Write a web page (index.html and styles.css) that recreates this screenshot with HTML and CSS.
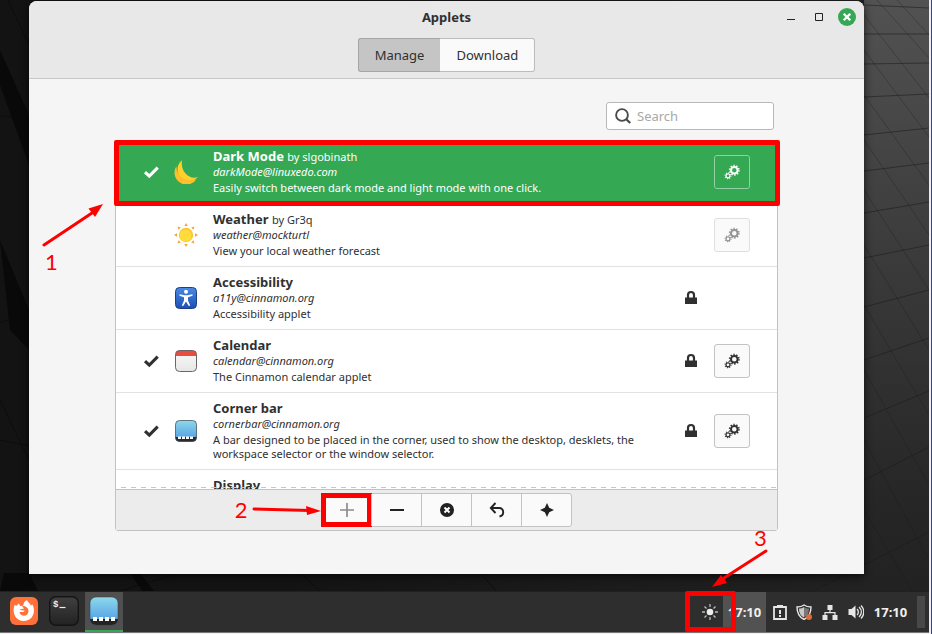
FILE: index.html
```html
<!DOCTYPE html>
<html lang="en">
<head>
<meta charset="utf-8">
<title>Applets</title>
<link rel="stylesheet" href="styles.css">
</head>
<body>
<svg class="defs" aria-hidden="true">
  <defs>
    <linearGradient id="blue" x1="0" y1="0" x2="0" y2="1"><stop offset="0" stop-color="#4a8ae4"/><stop offset="1" stop-color="#1b4fb4"/></linearGradient>
    <linearGradient id="sky" x1="0" y1="0" x2="0" y2="1"><stop offset="0" stop-color="#8ed8ea"/><stop offset="1" stop-color="#4a97e6"/></linearGradient>
    <linearGradient id="paper" x1="0" y1="0" x2="0" y2="1"><stop offset="0" stop-color="#fafafa"/><stop offset="1" stop-color="#e6e6e6"/></linearGradient>
    <linearGradient id="coal" x1="0" y1="0" x2="0" y2="1"><stop offset="0" stop-color="#404040"/><stop offset="1" stop-color="#222"/></linearGradient>
    <symbol id="check" viewBox="0 0 16 16"><path d="M2 8.1l4.300 4L14.700 3.700" fill="none" stroke="currentColor" stroke-width="3.100"/></symbol>
    <symbol id="lock" viewBox="0 0 16 16"><path d="M2 7.500h12V14H2z" fill="currentColor"/><path d="M5 8V5a3 3 0 0 1 6 0v3" fill="none" stroke="currentColor" stroke-width="2.200"/></symbol>
    <symbol id="gears" viewBox="0 0 16 16">
      <g fill="none" stroke="currentColor">
        <circle cx="10.300" cy="6.200" r="3.300" stroke-width="2"/>
        <circle cx="10.300" cy="6.200" r="4.700" stroke-width="1.600" stroke-dasharray="1.400 1.550"/>
        <circle cx="4" cy="11.800" r="2" stroke-width="1.200"/>
        <circle cx="4" cy="11.800" r="3" stroke-width="1.100" stroke-dasharray="1 1.350"/>
      </g>
    </symbol>
  </defs>
</svg>

<main class="desktop">
  <svg class="wallpaper" viewBox="0 0 929 591" preserveAspectRatio="none" aria-hidden="true">
    <g fill="#090909">
      <path d="M0 50L29 115V165L0 85zM0 240L29 310V350L10 330zM29 573L38 591H0L4 573zM130 573l12 18h12l-14-18z"/>
    </g>
    <g stroke="#0b0b0b" stroke-opacity=".7" stroke-width="1" fill="none">
      <path d="M0 322l29-6M0 116l29 2M0 440l29 6M8 0l21 45M0 400l29 60M120 591l60-18M300 573l20 18M480 573l16 18"/>
    </g>
    <g stroke="#1c1c1c" stroke-opacity=".3" stroke-width="1" fill="none">
      <path stroke-opacity=".55" d="M864 5l65 3M864 34l65 0M864 64l65-1M864 97l65-3M864 135l65-7M864 171l65-8M864 213l65-11M864 258l65-13M864 307l65-17M864 360l65-22M864 418l65-27M864 480l65-33M813 591l116-59"/>
      <path d="M877 0l52 58M897 0l32 35M864 15l65 83M864 50l65 87M864 95l65 90M864 140l65 95M864 190l65 100M864 245l65 105M864 305l65 110M864 370l65 115M864 440l65 120M864 510l48 81"/>
    </g>
  </svg>

  <section class="window" aria-label="Applets">
    <header class="titlebar">
      <div class="title-row">
        <h1>Applets</h1>
        <div class="controls">
          <button aria-label="Minimize"><svg viewBox="0 0 18 18"><path d="M5 11.500h8" stroke="#222"/></svg></button>
          <button aria-label="Maximize"><svg viewBox="0 0 18 18"><path d="M5.500 5.500h7v7h-7z" fill="none" stroke="#222"/></svg></button>
          <button aria-label="Close"><svg viewBox="0 0 18 18"><circle cx="9" cy="9" r="9" fill="#35a854"/><path d="M5.700 5.700l6.600 6.600M12.300 5.700l-6.600 6.600" stroke="#fff" stroke-width="2.300"/></svg></button>
        </div>
      </div>
      <nav class="tabs">
        <button class="tab active">Manage</button>
        <button class="tab">Download</button>
      </nav>
    </header>

    <div class="content">
      <label class="search">
        <svg viewBox="0 0 16 16" aria-hidden="true"><circle cx="7" cy="7" r="5.900" fill="none" stroke="#4a4a4a" stroke-width="1.900"/><path d="M11 11l4.200 4" stroke="#4a4a4a" stroke-width="2.300"/></svg>
        <input type="search" placeholder="Search" aria-label="Search">
      </label>

      <div class="panel">
        <ul class="applets">
          <li class="applet selected">
            <svg class="mark"><use href="#check"/></svg>
            <svg class="icon" viewBox="0 0 24 24"><path d="M8 .2A11.600 11.600 0 1 0 24 16.800C16 20.500 6 12 8 .2z" fill="#ffd02c"/><path d="M2.500 6A11.600 11.600 0 0 0 22.500 19.200C13 23 1.500 16 2.500 6z" fill="#fdbf2d"/><path d="M13 3.500l1 1.500-1 1.500-1-1.500zM12.500 10l1.200 1.300-1.200 1.300-1.200-1.300zM19.500 9l1 1.200-1 1.200-1-1.200z" fill="#2b9c85"/></svg>
            <div class="info"><h2>Dark Mode <span>by slgobinath</span></h2><em>darkMode@linuxedo.com</em><p>Easily switch between dark mode and light mode with one click.</p></div>
            <span class="locked"></span>
            <button class="gear" aria-label="Configure Dark Mode"><svg><use href="#gears"/></svg></button>
          </li>
          <li class="applet">
            <span class="mark"></span>
            <svg class="icon" viewBox="0 0 24 24"><g fill="#f8a23b"><path id="ray" d="M12 0l1.700 3h-3.400z"/><use href="#ray" transform="rotate(45 12 12)"/><use href="#ray" transform="rotate(90 12 12)"/><use href="#ray" transform="rotate(135 12 12)"/><use href="#ray" transform="rotate(180 12 12)"/><use href="#ray" transform="rotate(225 12 12)"/><use href="#ray" transform="rotate(270 12 12)"/><use href="#ray" transform="rotate(315 12 12)"/></g><circle cx="12" cy="12" r="7.200" fill="#fdc62c"/><circle cx="11.500" cy="12.500" r="6" fill="#ffdc3c"/></svg>
            <div class="info"><h2>Weather <span>by Gr3q</span></h2><em>weather@mockturtl</em><p>View your local weather forecast</p></div>
            <span class="locked"></span>
            <button class="gear" disabled aria-label="Configure Weather"><svg><use href="#gears"/></svg></button>
          </li>
          <li class="applet">
            <span class="mark"></span>
            <svg class="icon" viewBox="0 0 24 24"><rect x="1.500" y="1.500" width="21" height="21" rx="4" fill="url(#blue)" stroke="#1c3f86"/><circle cx="12" cy="5.800" r="2" fill="#fff"/><path d="M5.500 8.200l5 1h3l5-1v1.500l-4.500 1.500v3.300l2.200 5-1.400.5L12 15.500 9.200 20l-1.400-.5 2.200-5v-3.300L5.500 9.700z" fill="#fff"/></svg>
            <div class="info"><h2>Accessibility</h2><em>a11y@cinnamon.org</em><p>Accessibility applet</p></div>
            <svg class="locked"><use href="#lock"/></svg>
            <span class="gear-space"></span>
          </li>
          <li class="applet">
            <svg class="mark"><use href="#check"/></svg>
            <svg class="icon" viewBox="0 0 24 24"><rect x="1.500" y="1.500" width="21" height="21" rx="4" fill="url(#paper)"/><path d="M1.500 7V5.500a4 4 0 0 1 4-4h13a4 4 0 0 1 4 4V7z" fill="#e84e40"/><rect x="1.500" y="1.500" width="21" height="21" rx="4" fill="none" stroke="#6b6565"/></svg>
            <div class="info"><h2>Calendar</h2><em>calendar@cinnamon.org</em><p>The Cinnamon calendar applet</p></div>
            <svg class="locked"><use href="#lock"/></svg>
            <button class="gear" aria-label="Configure Calendar"><svg><use href="#gears"/></svg></button>
          </li>
          <li class="applet">
            <svg class="mark"><use href="#check"/></svg>
            <svg class="icon" viewBox="0 0 24 24"><rect x="1.500" y="1.500" width="21" height="21" rx="4" fill="url(#sky)"/><path d="M1.500 18h21v.5a4 4 0 0 1-4 4h-13a4 4 0 0 1-4-4z" fill="#2b2b2b"/><path d="M4 17.500h3v2.500H4zM8 17.500h3v2.500H8zM12 17.500h3v2.500h-3zM16 17.500h3v2.500h-3z" fill="#fff"/><rect x="1.500" y="1.500" width="21" height="21" rx="4" fill="none" stroke="#33474f" stroke-opacity=".7"/></svg>
            <div class="info"><h2>Corner bar</h2><em>cornerbar@cinnamon.org</em><p>A bar designed to be placed in the corner, used to show the desktop, desklets, the workspace selector or the window selector.</p></div>
            <svg class="locked"><use href="#lock"/></svg>
            <button class="gear" aria-label="Configure Corner bar"><svg><use href="#gears"/></svg></button>
          </li>
          <li class="applet last">
            <span class="mark"></span><span class="icon"></span>
            <div class="info"><h2>Display</h2></div>
          </li>
        </ul>

        <div class="toolbar">
          <div class="tools">
            <button disabled aria-label="Add"><svg viewBox="0 0 16 16"><path d="M1 8h14M8 1v14" stroke="#8c8c8c" stroke-width="1.700"/></svg></button>
            <button aria-label="Remove"><svg viewBox="0 0 16 16"><path d="M1 8h14" stroke="#222" stroke-width="2"/></svg></button>
            <button aria-label="Uninstall"><svg viewBox="0 0 16 16"><circle cx="8" cy="8" r="7" fill="#222"/><path d="M5.500 5.500l5 5M10.500 5.500l-5 5" stroke="#fff" stroke-width="2"/></svg></button>
            <button aria-label="Restore defaults"><svg viewBox="0 0 16 16"><path d="M2 6h8a4 4 0 0 1 4.200 4.300c0 2.300-1.300 3.700-3.700 4.200M6.500 1L1.800 6l4.700 5" fill="none" stroke="#222" stroke-width="1.900"/></svg></button>
            <button aria-label="New"><svg viewBox="0 0 16 16"><path d="M8 1l2.200 4.800L15 8l-4.800 2.200L8 15l-2.200-4.800L1 8l4.800-2.200z" fill="#222"/></svg></button>
          </div>
          <div class="step two"><span>2</span><svg viewBox="0 0 70 14"><path d="M3 6l56 1.500" stroke="red" stroke-width="3" stroke-linecap="round"/><path d="M70 8L55 3l1 9z" fill="red"/></svg></div>
        </div>
        <i class="frame row-frame"></i>
        <div class="step one"><svg viewBox="0 0 62 44"><path d="M2 42L50 10" stroke="red" stroke-width="3" stroke-linecap="round"/><path d="M61 1L46.500 5.500 53 14z" fill="red"/></svg><span>1</span></div>
      </div>
    </div>
  </section>
</main>

<footer class="taskbar">
  <div class="launchers">
    <button aria-label="Firefox"><svg viewBox="0 0 30 30"><rect x="1" y="1" width="28" height="28" rx="6" fill="#ff7139"/><path d="M5.500 9l2 .8L9.800 7.500l1.500 2.500 2.700-.3 1.300-3.700L18 4c.5 2 3 3.500 4 5.500l1.500-1c4 8-.5 16.500-8.500 16.500S2.500 17.500 5.500 9z" fill="#fff"/><path d="M10.500 14c1.500-1.500 3-1 4.500-1.500L13 10c2.500-.5 6.500 1 6.500 5 0 3-2 4.700-4.500 4.700S10.500 18 10.500 16h3.500c1 0 1.500-1 1.500-1.500z" fill="#ff7139"/></svg></button>
    <button aria-label="Terminal"><svg viewBox="0 0 30 30"><rect x=".7" y=".7" width="28.600" height="28.600" rx="6" fill="url(#coal)" stroke="#141414" stroke-width="1.400"/><text x="4" y="11" class="prompt">$</text><path d="M10.500 11.500h6" stroke="#eee" stroke-width="1.200"/></svg></button>
    <button class="running" aria-label="Applets"><svg viewBox="0 0 30 30"><rect x="1" y="1" width="28" height="28" rx="6" fill="url(#sky)"/><path d="M1 23h28a6 6 0 0 1-6 6H7a6 6 0 0 1-6-6z" fill="#222"/><path d="M4 21h4v4H4zM10 21h4v4h-4zM16 21h4v4h-4zM22 21h4v4h-4z" fill="#fff"/><rect x="1" y="1" width="28" height="28" rx="6" fill="none" stroke="#333" stroke-opacity=".5"/></svg></button>
  </div>
  <div class="tray">
    <button class="sun" aria-label="Dark mode"><svg viewBox="0 0 16 16"><circle cx="8" cy="8" r="3.300" fill="#eee"/><path d="M8 0v3M8 13v3M0 8h3M13 8h3M2.500 2.500l2 2M11.500 11.500l2 2M13.500 2.500l-2 2M2.500 13.500l2-2" stroke="#bbb" stroke-width="1.300"/></svg></button>
    <time class="clock raised">17:10</time>
    <svg class="tray-icon" viewBox="0 0 16 16"><path d="M2 3h12v12H2z" fill="none" stroke="#e6e6e6" stroke-width="1.800"/><path d="M5 1h6v3H5zM7 6h2v4H7zM7 11h2v2H7z" fill="#e6e6e6"/></svg>
    <svg class="tray-icon" viewBox="0 0 16 16"><path d="M8 1c2 1.500 4.500 2 7 2 0 6-2 10-7 12.500C3 13 1 9 1 3c2.500 0 5-.5 7-2z" fill="none" stroke="#e6e6e6" stroke-width="1.400"/><path d="M8 3c1.500 1 3.300 1.500 5 1.500 0 4-1.500 7.500-5 9z" fill="#777"/><path d="M8 3C6.500 4 4.700 4.500 3 4.500c0 4 1.500 7.500 5 9z" fill="#c8c8c8"/><circle cx="13" cy="13" r="3" fill="#dd6c38"/></svg>
    <svg class="tray-icon" viewBox="0 0 16 16"><path d="M5.500 1h5v5h-5zM.5 11h5v5h-5zM10.500 11h5v5h-5z" fill="#e6e6e6"/><path d="M8 6v3M3 11V8.700h10V11" fill="none" stroke="#e6e6e6" stroke-width="1.200"/></svg>
    <svg class="tray-icon" viewBox="0 0 16 16"><path d="M.5 5h3L7.500 1.500v13L3.500 11h-3z" fill="#e6e6e6"/><path d="M9 5a4 4 0 0 1 0 6M11 3a6.500 6.500 0 0 1 0 10M13 1.500a9 9 0 0 1 0 13" fill="none" stroke="#e6e6e6" stroke-width="1.300"/></svg>
    <time class="clock">17:10</time>
    <button class="peek" aria-label="Show desktop"></button>
    <i class="frame tray-frame"></i>
    <div class="step three"><span>3</span><svg viewBox="0 0 56 40"><path d="M54 2L12 29" stroke="red" stroke-width="3" stroke-linecap="round"/><path d="M0 38L9 26l6 8z" fill="red"/></svg></div>
  </div>
</footer>
</body>
</html>
```
FILE: styles.css
```css
* { box-sizing: border-box; }

body {
  margin: 0;
  height: 100vh;
  display: flex;
  flex-direction: column;
  overflow: hidden;
  border-right: 1px solid #174ea6;
  background: #e9edf3;
  color: #303030;
  font: 11px/14px "Noto Sans", "Open Sans", sans-serif;
}

h1, h2, p, ul { margin: 0; padding: 0; }
ul { list-style: none; }
svg { display: block; flex: none; }
button {
  padding: 0;
  border: 0;
  background: none;
  color: inherit;
  font: inherit;
}

.defs { position: absolute; width: 0; height: 0; }

.desktop {
  position: relative;
  flex: 1;
  min-height: 0;
  margin-right: 2px;
  padding: 1px 65px 17px 29px;
  display: flex;
  background:
    linear-gradient(to bottom, #525252 0, #3a3a3a 45%, #262626 85%, #222 100%) right / 65px 100% no-repeat,
    linear-gradient(to right, #131313 0, #131313 30%, #232323 100%);
}
.wallpaper { position: absolute; inset: 0; width: 100%; height: 100%; }

.window {
  position: relative;
  flex: 1;
  min-width: 0;
  display: flex;
  flex-direction: column;
  border-radius: 8px 8px 0 0;
  background: #f5f5f5;
  box-shadow: 0 2px 8px rgba(0, 0, 0, .7);
}
.titlebar {
  height: 78px;
  border-bottom: 1px solid #c8c8c8;
  border-radius: 8px 8px 0 0;
  background: #e8e8e8;
}
.title-row {
  display: grid;
  grid-template-columns: 1fr auto 1fr;
  align-items: center;
  height: 32px;
  padding: 0 8px;
}
.title-row h1 {
  grid-column: 2;
  font-size: 13px;
  line-height: 18px;
}
.controls { display: flex; justify-content: flex-end; gap: 10px; }
.controls svg { width: 18px; height: 18px; }
.tabs { display: flex; justify-content: center; margin-top: 5px; }
.tab {
  height: 34px;
  padding: 0 16px;
  border: 1px solid #bcbcbc;
  border-left: 0;
  border-radius: 0 3px 3px 0;
  background: #fafafa;
  font-size: 13px;
}
.tab.active {
  border: 1px solid #a5a5a5;
  border-right: 0;
  border-radius: 3px 0 0 3px;
  background: #c5c5c5;
}

.content {
  flex: 1;
  min-height: 0;
  display: flex;
  flex-direction: column;
  padding: 23px 86px 43px;
}
.search {
  align-self: flex-end;
  display: flex;
  align-items: center;
  gap: 6px;
  width: 168px;
  height: 28px;
  margin: 0 4px 10px 0;
  padding: 0 8px;
  border: 1px solid #b8b8b8;
  border-radius: 3px;
  background: #fff;
}
.search svg { width: 16px; height: 16px; }
.search input {
  flex: 1;
  min-width: 0;
  padding: 0;
  border: 0;
  outline: 0;
  background: none;
  font: 13px/18px "Noto Sans", "Open Sans", sans-serif;
}
.search input::placeholder { color: #a8a8a8; }

.panel {
  position: relative;
  flex: 1;
  min-height: 0;
  display: flex;
  flex-direction: column;
  border: 1px solid #c2c2c2;
  border-radius: 3px;
  background: #fff;
}
.applets { position: relative; flex: 1; min-height: 0; overflow: hidden; }
.applets::after {
  content: "";
  position: absolute;
  inset: auto 0 1px;
  height: 1px;
  background: repeating-linear-gradient(to right, transparent 0 5px, #c6c6c6 5px 10px);
}
.applet {
  display: flex;
  align-items: center;
  padding: 7px 27px 8px;
  border-bottom: 1px solid #e2e2e2;
}
.applet.selected { background: #35a854; border-color: #35a854; color: #fff; }
.applet.last { border: 0; align-items: flex-start; }
.mark { width: 16px; height: 16px; margin-right: 15px; }
.icon { width: 24px; height: 24px; margin-right: 15px; }
.info { flex: 1; min-width: 0; padding-right: 48px; }
.info h2 { font-size: 13px; line-height: 16px; }
.info h2 span { font-size: 11px; font-weight: 400; line-height: 11px; }
.info em { display: block; line-height: 15px; }
.info p { margin-top: 2px; }
.locked { width: 16px; height: 16px; margin-right: 15px; }
.gear, .gear-space { width: 36px; height: 34px; }
.gear {
  display: grid;
  place-items: center;
  border: 1px solid #c2c2c2;
  border-radius: 3px;
  background: #fafafa;
}
.gear svg { width: 16px; height: 16px; }
.gear:disabled { border-color: #dfdfdf; color: #929292; }
.selected .gear { border-color: #92cfa2; background: none; }

.toolbar {
  position: relative;
  display: flex;
  justify-content: center;
  padding: 3px;
  border-top: 1px solid #c2c2c2;
  background: #ececec;
}
.tools {
  display: flex;
  border: 1px solid #c2c2c2;
  border-radius: 3px;
  background: #fafafa;
}
.tools button { display: grid; place-items: center; width: 50px; height: 32px; }
.tools button + button { border-left: 1px solid #c2c2c2; }
.tools svg { width: 16px; height: 16px; }
.tools button:first-child { width: 49px; box-shadow: 0 0 0 1px red, inset 0 0 0 4px red; }

.frame { position: absolute; border: 5px solid red; border-radius: 2px; }
.row-frame { inset: -1px -3px auto -2px; height: 66px; }
.step {
  position: absolute;
  color: red;
  font: 22px/22px Lato, sans-serif;
}
.one { top: 62px; left: -74px; width: 62px; }
.one svg { width: 62px; height: 44px; }
.one span { display: block; padding-left: 3px; margin-top: 4px; }
.two { top: 9px; right: calc(50% + 126px); display: flex; align-items: center; gap: 3px; }
.two svg { width: 70px; height: 14px; }
.three { bottom: 43px; left: 15px; }
.three span { display: block; padding-left: 42px; }
.three svg { width: 56px; height: 40px; }

.taskbar {
  height: 43px;
  flex: none;
  margin-right: 2px;
  display: flex;
  justify-content: space-between;
  border-top: 1px solid #202020;
  border-bottom: 1px solid #f2f2f2;
  background: #2e2e2e;
  box-shadow: inset 0 -1px #777;
}
.launchers { display: flex; gap: 2px; padding-left: 5px; }
.launchers button {
  width: 38px;
  height: 40px;
  display: flex;
  justify-content: center;
  padding-top: 4px;
}
.launchers svg { width: 30px; height: 30px; }
.launchers .running { background: #505050; border-bottom: 2px solid #35a854; }
.prompt { fill: #eee; font: bold 9px "Liberation Mono", monospace; }

.tray {
  position: relative;
  display: flex;
  align-items: center;
  height: 40px;
  padding-right: 4px;
}
.sun { padding: 0 5px; }
.sun svg { width: 16px; height: 16px; }
.clock {
  width: 43px;
  color: #eee;
  font-size: 13px;
  font-weight: 700;
  line-height: 40px;
  text-align: center;
}
.raised { height: 40px; background: #525252; }
.tray-icon { width: 16px; height: 16px; margin-left: 6px; }
.tray-icon + .tray-icon { margin-left: 10px; }
.raised + .tray-icon + .tray-icon { margin-left: 8px; }
.tray-icon + .clock { margin-left: 5px; }
.peek { width: 8px; height: 32px; margin-left: 5px; background: #484848; }
.tray-frame { top: -1px; left: -12px; width: 51px; height: 41px; }
```
